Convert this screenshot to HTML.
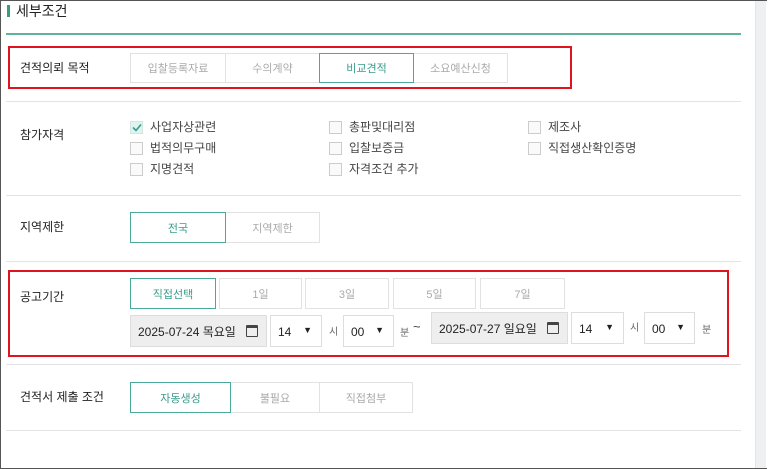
<!DOCTYPE html>
<html><head><meta charset="utf-8"><style>
*{margin:0;padding:0;box-sizing:border-box}
body{width:768px;height:469px;overflow:hidden;background:#fff;font-family:"Liberation Sans","Noto Sans CJK KR",sans-serif;position:relative;color:#333}
.a{position:absolute}
.frame{left:0;top:0;width:767px;height:469px;border:1px solid #555;border-right:none}
.sb{left:755px;top:1px;width:11px;height:467px;background:#eef0f1;border-left:1px solid #e2e4e5}
.hl{height:1px;background:#e3e3e3;left:6px;width:735px}
.lbl{font-size:12px;color:#222;line-height:14px}
.b{border:1px solid #e2e2e2;font-size:11px;color:#aaa;background:#fff;display:flex;align-items:center;justify-content:center;line-height:1;padding-top:3px}
.act{border:1.5px solid #4aa99a;color:#3a9c8c;z-index:2}
.red{border:2px solid #e0141e}
.cb{width:13px;height:13px;border:1px solid #ccc;background:#fafafa}
.ct{font-size:12px;color:#444;line-height:14px}
.dt{background:#eee;border:1px solid #ddd;font-size:12px;color:#222;padding-left:7px;display:flex;align-items:center;line-height:1;padding-top:2px}
.sel{border:1px solid #ddd;background:#fff;font-size:12px;color:#222;padding-left:7px;display:flex;align-items:center;line-height:1;padding-top:2px}
.sel:after{content:"▼";position:absolute;right:9px;top:50%;margin-top:-6px;font-size:9px;line-height:10px}
.u{font-size:10px;color:#666;line-height:12px}
.cal{position:absolute;right:8px;top:50%;margin-top:-6px;width:12px;height:12px;border:1.5px solid #444;border-top-width:3px;border-radius:1px}
</style></head><body>
<div class="a frame"></div>
<div class="a sb"></div>
<div class="a" style="left:7px;top:5px;width:3px;height:12px;background:#3a9c7f"></div>
<div class="a" style="left:16px;top:3px;font-size:14px;color:#222;line-height:17px">세부조건</div>
<div class="a" style="left:6px;top:33px;width:735px;height:2px;background:#5fb39b"></div>

<div class="a red" style="left:8px;top:46px;width:564px;height:43px"></div>
<div class="a lbl" style="left:20px;top:61px">견적의뢰 목적</div>
<div class="a b" style="left:130px;top:53px;width:96px;height:30px">입찰등록자료</div>
<div class="a b" style="left:225px;top:53px;width:95px;height:30px">수의계약</div>
<div class="a b act" style="left:319px;top:53px;width:95px;height:30px">비교견적</div>
<div class="a b" style="left:413px;top:53px;width:95px;height:30px">소요예산신청</div>
<div class="a hl" style="top:101px"></div>

<div class="a lbl" style="left:20px;top:128px">참가자격</div>
<div class="a cb" style="left:130px;top:121px;background:#dff3f0;border-color:#d5e5e2"></div>
<svg class="a" style="left:132px;top:123px" width="10" height="9"><path d="M1 4.5L4 7.5L9 1.5" stroke="#3a9c8c" stroke-width="1.6" fill="none"/></svg>
<div class="a ct" style="left:150px;top:120px">사업자상관련</div>
<div class="a cb" style="left:130px;top:142px"></div><div class="a ct" style="left:150px;top:141px">법적의무구매</div>
<div class="a cb" style="left:130px;top:163px"></div><div class="a ct" style="left:150px;top:162px">지명견적</div>
<div class="a cb" style="left:329px;top:121px"></div><div class="a ct" style="left:349px;top:120px">총판및대리점</div>
<div class="a cb" style="left:329px;top:142px"></div><div class="a ct" style="left:349px;top:141px">입찰보증금</div>
<div class="a cb" style="left:329px;top:163px"></div><div class="a ct" style="left:349px;top:162px">자격조건 추가</div>
<div class="a cb" style="left:528px;top:121px"></div><div class="a ct" style="left:548px;top:120px">제조사</div>
<div class="a cb" style="left:528px;top:142px"></div><div class="a ct" style="left:548px;top:141px">직접생산확인증명</div>
<div class="a hl" style="top:195px"></div>

<div class="a lbl" style="left:20px;top:220px">지역제한</div>
<div class="a b act" style="left:130px;top:212px;width:96px;height:31px">전국</div>
<div class="a b" style="left:225px;top:212px;width:95px;height:31px">지역제한</div>
<div class="a hl" style="top:261px"></div>

<div class="a red" style="left:8px;top:270px;width:721px;height:87px"></div>
<div class="a lbl" style="left:20px;top:290px">공고기간</div>
<div class="a b act" style="left:130px;top:278px;width:86px;height:31px">직접선택</div>
<div class="a b" style="left:219px;top:278px;width:83px;height:31px">1일</div>
<div class="a b" style="left:305px;top:278px;width:84px;height:31px">3일</div>
<div class="a b" style="left:393px;top:278px;width:83px;height:31px">5일</div>
<div class="a b" style="left:480px;top:278px;width:85px;height:31px">7일</div>

<div class="a dt" style="left:130px;top:315px;width:137px;height:32px">2025-07-24 목요일<span class="cal"></span></div>
<div class="a sel" style="left:270px;top:315px;width:52px;height:32px">14</div>
<div class="a u" style="left:329px;top:327px">시</div>
<div class="a sel" style="left:343px;top:315px;width:51px;height:32px">00</div>
<div class="a u" style="left:400px;top:328px">분</div>
<div class="a" style="left:413px;top:319px;font-size:13px;color:#444">~</div>
<div class="a dt" style="left:431px;top:312px;width:137px;height:32px">2025-07-27 일요일<span class="cal"></span></div>
<div class="a sel" style="left:571px;top:312px;width:53px;height:32px">14</div>
<div class="a u" style="left:630px;top:323px">시</div>
<div class="a sel" style="left:644px;top:312px;width:51px;height:32px">00</div>
<div class="a u" style="left:702px;top:325px">분</div>
<div class="a hl" style="top:364px"></div>

<div class="a lbl" style="left:20px;top:390px">견적서 제출 조건</div>
<div class="a b act" style="left:130px;top:382px;width:101px;height:31px">자동생성</div>
<div class="a b" style="left:230px;top:382px;width:90px;height:31px">불필요</div>
<div class="a b" style="left:319px;top:382px;width:94px;height:31px">직접첨부</div>
<div class="a hl" style="top:430px"></div>
</body></html>
